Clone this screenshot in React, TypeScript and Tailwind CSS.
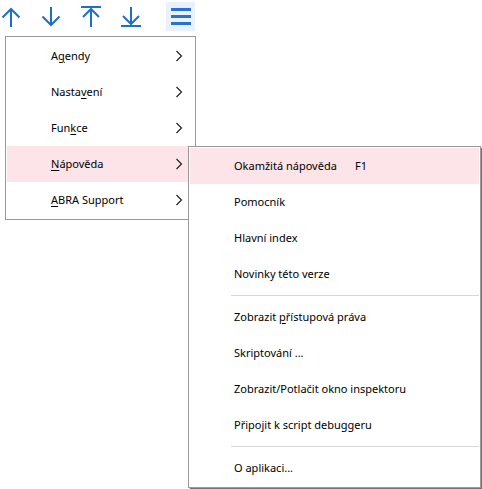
import React from "react";

const blue = "#1f6fc9";

function Chevron() {
  return (
    <svg width="8" height="12" viewBox="0 0 8 12" className="shrink-0">
      <polyline points="1.5,1 6.5,6 1.5,11" fill="none" stroke="#1a1a1a" strokeWidth="1.1" />
    </svg>
  );
}

function ArrowIcon({ kind }: { kind: "up" | "down" | "top" | "bottom" }) {
  return (
    <svg width="20" height="22" viewBox="0 0 20 22" fill="none" stroke={blue} strokeWidth="2">
      {kind === "up" && (
        <>
          <line x1="10" y1="3" x2="10" y2="21" />
          <polyline points="1.5,11.5 10,3 18.5,11.5" />
        </>
      )}
      {kind === "down" && (
        <>
          <line x1="10" y1="1" x2="10" y2="19" />
          <polyline points="1.5,10.5 10,19 18.5,10.5" />
        </>
      )}
      {kind === "top" && (
        <>
          <line x1="0" y1="1" x2="20" y2="1" />
          <line x1="10" y1="3" x2="10" y2="21" />
          <polyline points="2,11 10,3 18,11" />
        </>
      )}
      {kind === "bottom" && (
        <>
          <line x1="0" y1="20" x2="20" y2="20" />
          <line x1="10" y1="1" x2="10" y2="18" />
          <polyline points="2,10 10,18 18,10" />
        </>
      )}
    </svg>
  );
}

function U({ children }: { children: React.ReactNode }) {
  return <span className="underline underline-offset-2">{children}</span>;
}

const mainItems: { label: React.ReactNode; active?: boolean }[] = [
  { label: <>A<U>g</U>endy</> },
  { label: <>Nasta<U>v</U>ení</> },
  { label: <>Fun<U>k</U>ce</> },
  { label: <><U>N</U>ápověda</>, active: true },
  { label: <><U>A</U>BRA Support</> },
];

type SubItem = { label?: React.ReactNode; shortcut?: string; active?: boolean; sep?: boolean };

const subItems: SubItem[] = [
  { label: "Okamžitá nápověda", shortcut: "F1", active: true },
  { label: "Pomocník" },
  { label: "Hlavní index" },
  { label: "Novinky této verze" },
  { sep: true },
  { label: <>Zobrazit <U>p</U>řístupová práva</> },
  { label: "Skriptování ..." },
  { label: "Zobrazit/Potlačit okno inspektoru" },
  { label: "Připojit k script debuggeru" },
  { sep: true },
  { label: "O aplikaci..." },
];

export default function App() {
  return (
    <div
      className="relative w-[482px] h-[489px] bg-white text-black text-[11px] overflow-hidden"
      style={{ fontFamily: '"Segoe UI", "Noto Sans", "Open Sans", sans-serif' }}
    >
      {/* Toolbar */}
      <div className="flex items-start h-[36px] pl-[1px]">
        <div className="flex items-center gap-[20px] pt-[6px]">
          <ArrowIcon kind="up" />
          <ArrowIcon kind="down" />
          <ArrowIcon kind="top" />
          <ArrowIcon kind="bottom" />
        </div>
        <div className="ml-[25px] mt-[2px] w-[29px] h-[29px] bg-[#e8f1fc] flex flex-col items-center justify-center gap-[4px]">
          <div className="w-[20px] h-[3px] bg-[#2573cf]" />
          <div className="w-[20px] h-[3px] bg-[#2573cf]" />
          <div className="w-[20px] h-[3px] bg-[#2573cf]" />
        </div>
      </div>

      {/* Main menu */}
      <div className="ml-[5px] w-[191px] border border-[#999999] bg-white py-[1px] px-[1px]">
        {mainItems.map((it, i) => (
          <div
            key={i}
            className={`flex items-center h-[36px] pl-[44px] pr-[11px] whitespace-nowrap ${it.active ? "bg-[#fde4e8]" : ""}`}
          >
            <span className="flex-1">{it.label}</span>
            <Chevron />
          </div>
        ))}
      </div>

      {/* Submenu */}
      <div className="absolute left-[188px] top-[146px] w-[293px] border border-[#999999] bg-white p-[1px] shadow-[2px_2px_1px_rgba(0,0,0,0.55)]">
        {subItems.map((it, i) =>
          it.sep ? (
            <div key={i} className="h-[7px] flex items-center pl-[41px]">
              <div className="w-full h-[1px] bg-[#d7d7d7]" />
            </div>
          ) : (
            <div
              key={i}
              className={`flex items-center h-[36px] pl-[44px] whitespace-nowrap ${it.active ? "bg-[#fde4e8]" : ""}`}
            >
              <span className="min-w-[121px]">{it.label}</span>
              {it.shortcut && <span>{it.shortcut}</span>}
            </div>
          )
        )}
      </div>
    </div>
  );
}
